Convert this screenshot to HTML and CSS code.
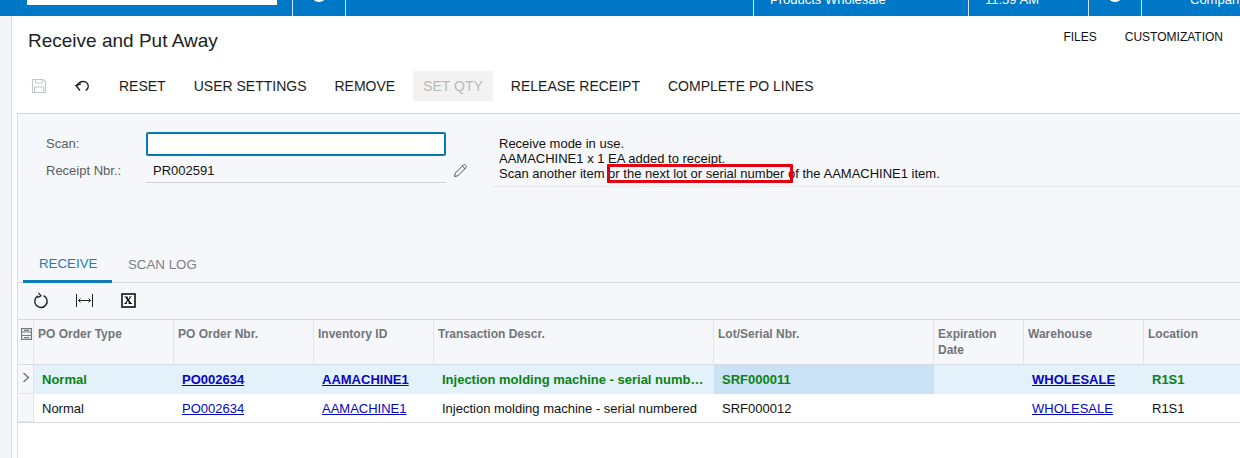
FILE: index.html
```html
<!DOCTYPE html>
<html lang="en">
<head>
<meta charset="utf-8">
<title>Receive and Put Away</title>
<link rel="stylesheet" href="styles.css">
</head>
<body>
<header class="topbar">
  <div class="cell cell-search"><div class="search"></div></div>
  <div class="cell cell-icon"><span class="dot"></span></div>
  <div class="cell cell-fill"></div>
  <div class="cell cell-branch"><span class="clip">Products Wholesale</span></div>
  <div class="cell cell-time"><span class="clip">11:59 AM</span></div>
  <div class="cell cell-icon"><span class="dot"></span></div>
  <div class="cell cell-company"><span class="clip">Company</span></div>
</header>
<div class="shell">
  <aside class="rail"></aside>
  <main class="page">
    <div class="titlebar">
      <h1>Receive and Put Away</h1>
      <nav class="links"><span>FILES</span><span>CUSTOMIZATION</span></nav>
    </div>
    <div class="toolbar">
      <button class="tool icon-tool" aria-label="Save">
        <svg width="16" height="16" viewBox="0 0 16 16" fill="none" stroke="#c4c7ca" stroke-width="1.1"><path d="M1.5 1.5h10.5l2.5 2.5v10.5h-13z"/><path d="M4.5 1.5v3.5h6.5v-3.5"/><path d="M3.5 14.5v-5.5h9v5.5"/></svg>
      </button>
      <button class="tool icon-tool undo" aria-label="Undo">
        <svg width="17" height="14" viewBox="0 0 16 14" fill="none" stroke="#222" stroke-width="1.4"><path d="M5.5 11.5 1.5 6.5l5-1.6"/><path d="M2 6.4C4.5 3.2 7.5 2 10 2.6c3.2.8 4.6 4 3.3 6.5-.5 1-1.2 1.7-2.1 2.3"/></svg>
      </button>
      <button class="tool">RESET</button>
      <button class="tool">USER SETTINGS</button>
      <button class="tool">REMOVE</button>
      <button class="tool disabled">SET QTY</button>
      <button class="tool">RELEASE RECEIPT</button>
      <button class="tool">COMPLETE PO LINES</button>
    </div>
    <section class="panel">
      <div class="form">
        <div class="fields">
          <div class="field">
            <label>Scan:</label>
            <div class="scan"></div>
          </div>
          <div class="field">
            <label>Receipt Nbr.:</label>
            <div class="value">PR002591</div>
            <svg class="pencil" width="15" height="15" viewBox="0 0 15 15" fill="none" stroke="#555" stroke-width="1"><path d="M1.5 13.5l.8-3.4 8-8.1c.6-.6 1.4-.6 2 0l.7.7c.6.6.6 1.4 0 2l-8.1 8-3.4.8z"/><path d="M9.3 3l2.7 2.7"/></svg>
          </div>
        </div>
        <div class="message">
          <div>Receive mode in use.</div>
          <div>AAMACHINE1 x 1 EA added to receipt.</div>
          <div>Scan another item or the next lot or serial number of the AAMACHINE1 item.</div>
          <span class="callout"></span>
        </div>
      </div>
      <div class="tabs">
        <div class="tab active">RECEIVE</div>
        <div class="tab">SCAN LOG</div>
      </div>
      <div class="gridbar">
        <svg width="16" height="17" viewBox="0 0 16 17" fill="none" stroke="#222" stroke-width="1.4"><path d="M5 3.8A6.2 6.2 0 1 0 10.5 3.6"/><path d="M5.5 .8 8 3.9 4.5 5.6" stroke-width="1.2"/></svg>
        <svg width="17" height="13" viewBox="0 0 17 13" fill="none" stroke="#222" stroke-width="1"><path d="M.5 0v13M16.5 0v13M2.5 6.5h12"/><path d="M4.5 4.5 2.5 6.5l2 2M12.5 4.5l2 2-2 2"/></svg>
        <svg class="xl" width="15" height="15" viewBox="0 0 15 15"><rect x="1" y="1" width="13" height="13" fill="#fff" stroke="#111" stroke-width="1.6"/><path d="M3.3 3.4h3.6v.7l-.5.2 1.2 1.8 1.1-1.8-.5-.2v-.7h2.6v.7l-.8.2-1.9 2.7 2.2 3 .7.2v.7H7.5v-.7l.5-.2-1.2-1.9-1.3 1.9.6.2v.7H3.3v-.7l.8-.2 2.1-2.9-2.1-2.8-.8-.2z" fill="#111"/></svg>
      </div>
      <div class="grid">
        <div class="hd gutter">
          <svg width="11" height="12" viewBox="0 0 11 12" fill="none" stroke="#7a7a7a" stroke-width="1.2"><rect x=".6" y=".6" width="9.8" height="10.8"/><path d="M.6 4h9.8M.6 7.5h9.8M3 2.3h5M3 9.7h5"/></svg>
        </div>
        <div class="hd">PO Order Type</div>
        <div class="hd">PO Order Nbr.</div>
        <div class="hd">Inventory ID</div>
        <div class="hd">Transaction Descr.</div>
        <div class="hd">Lot/Serial Nbr.</div>
        <div class="hd">Expiration Date</div>
        <div class="hd">Warehouse</div>
        <div class="hd last">Location</div>

        <div class="td gutter first-gutter">
          <svg width="8" height="11" viewBox="0 0 8 11" fill="none" stroke="#6d6d6d" stroke-width="1.3"><path d="M1.5 1l5 4.5-5 4.5"/></svg>
        </div>
        <div class="td sel green">Normal</div>
        <div class="td sel"><a href="#">PO002634</a></div>
        <div class="td sel"><a href="#">AAMACHINE1</a></div>
        <div class="td sel green ell">Injection molding machine - serial numbered</div>
        <div class="td sel active-cell green">SRF000011</div>
        <div class="td sel"></div>
        <div class="td sel"><a href="#">WHOLESALE</a></div>
        <div class="td sel green">R1S1</div>

        <div class="td gutter"></div>
        <div class="td">Normal</div>
        <div class="td"><a href="#">PO002634</a></div>
        <div class="td"><a href="#">AAMACHINE1</a></div>
        <div class="td ell">Injection molding machine - serial numbered</div>
        <div class="td">SRF000012</div>
        <div class="td"></div>
        <div class="td"><a href="#">WHOLESALE</a></div>
        <div class="td">R1S1</div>
      </div>
    </section>
  </main>
</div>
</body>
</html>
```
FILE: styles.css
```css
* { box-sizing: border-box; }
html, body { margin: 0; height: 100%; overflow: hidden; }
body {
  width: 1240px;
  height: 458px;
  background: #fff;
  color: #111;
  font-family: "Liberation Sans", Arial, sans-serif;
  display: flex;
  flex-direction: column;
}

.topbar {
  height: 16px;
  flex: none;
  display: flex;
  background: #0078c8;
  color: #fff;
  font-size: 13px;
  overflow: hidden;
}
.cell { height: 16px; border-left: 1px solid #cfe4f4; position: relative; overflow: hidden; }
.cell-search { width: 292px; padding-left: 27px; border-left: 0; flex: none; display: block; }
.search { width: 250px; height: 5px; background: #fff; }
.cell-icon { width: 53px; flex: none; display: flex; justify-content: center; }
.dot { width: 16px; height: 16px; border-radius: 50%; background: #fff; margin-top: -14px; }
.cell-fill { width: 408px; flex: none; }
.cell-branch { width: 215px; flex: none; padding-left: 16px; }
.cell-time { width: 120px; flex: none; padding-left: 16px; }
.cell-company { flex: 1; padding-left: 48px; }
.clip { display: block; line-height: 15px; margin-top: -8px; white-space: nowrap; }

.shell { flex: 1; display: flex; min-height: 0; }
.rail { width: 12px; flex: none; background: #f3f5f8; border-right: 1px solid #d4d6d9; }
.page { flex: 1; min-width: 0; display: flex; flex-direction: column; padding-left: 5px; }

.titlebar { height: 50px; flex: none; display: flex; justify-content: space-between; }
h1 { margin: 14px 0 0 11px; font-size: 19px; line-height: 22px; font-weight: 400; color: #222; }
.links { display: flex; gap: 28px; padding: 14px 17px 0 0; font-size: 12px; line-height: 15px; color: #111; }

.toolbar { height: 47px; flex: none; display: flex; align-items: flex-start; padding-top: 5px; }
.tool {
  height: 30px;
  padding: 0 14px;
  border: 0;
  background: none;
  font: 14px/30px "Liberation Sans", Arial, sans-serif;
  color: #1c1c1c;
}
.icon-tool { display: flex; align-items: center; justify-content: center; padding: 0; }
.tool:first-child { width: 44px; }
.undo { width: 44px; padding-right: 2px; }
.disabled { background: #f2f2f2; color: #b9b9b9; padding: 0 10px; margin: 0 4px; }

.panel { flex: 1; background: #fff; border-top: 1px solid #d3d5d9; border-left: 1px solid #dcdee1; min-height: 0; }
.form { height: 125px; display: flex; position: relative; background: #f5f7fa; }
.fields { width: 475px; padding-top: 17px; flex: none; }
.field { display: flex; align-items: center; height: 25px; margin-bottom: 2px; position: relative; }
.field label { width: 128px; padding-left: 28px; font-size: 13px; color: #5c5c5c; flex: none; }
.scan { width: 300px; height: 24px; background: #fff; border: 2px solid #0678b8; border-radius: 2px; }
.value { width: 300px; height: 25px; padding: 5px 0 0 7px; font-size: 13px; border-bottom: 1px solid #ccced1; }
.pencil { margin-left: 7px; }
.message {
  margin-left: 0;
  margin-top: 22px;
  height: 51px;
  flex: 1;
  padding-left: 6px;
  font-size: 13px;
  line-height: 15px;
  border-bottom: 1px dotted #dcdcdc;
  color: #111;
  position: relative;
}
.callout { position: absolute; left: 114px; top: 28px; width: 186px; height: 19px; border: 3px solid #e40010; border-radius: 1px; }

.tabs { height: 44px; display: flex; background: #f5f7fa; border-bottom: 1px solid #d5d7da; padding-left: 5px; font-size: 13.3px; align-items: stretch; }
.tab { padding: 18px 16px 0; color: #7d7f82; }
.tab.active { color: #1b7db8; width: 89px; border-bottom: 3px solid #0d7cbd; padding-top: 17px; margin-bottom: -1px; }
.tab + .tab { padding-left: 16px; }

.gridbar { height: 37px; display: flex; align-items: center; background: #f5f7fa; padding: 0 0 2px 15px; gap: 27px; border-bottom: 1px solid #d5d7da; }
.xl { margin-left: 1px; }

.grid {
  display: grid;
  grid-template-columns: 16px 140px 140px 120px 280px 220px 90px 120px 96px;
  grid-template-rows: 45px 29px 28px;
  border-bottom: 1px solid #d5d7da;
  background: #fff;
  font-size: 13px;
}
.hd {
  background: #f5f7fa;
  border-right: 1px solid #e2e4e7;
  border-bottom: 1px solid #d9dbde;
  padding: 6px 4px 0;
  font-size: 12px;
  line-height: 16px;
  font-weight: 700;
  color: #727579;
}
.hd.last { border-right: 0; }
.gutter { padding: 8px 0 0 2px; }
.hd.gutter { padding-left: 3px; }
.td {
  padding: 1px 8px 0;
  line-height: 28px;
  white-space: nowrap;
  overflow: hidden;
  background: #fff;
}
.td.gutter { background: #f5f7fa; border-right: 1px solid #e2e4e7; border-bottom: 1px solid #e2e4e7; padding: 7px 0 0 4px; line-height: 0; }
.ell { text-overflow: ellipsis; }
.td a { color: #0505c4; text-decoration: underline; }
.sel { background: #e3f1fa; font-weight: 700; }
.green { color: #0a8214; }
.active-cell { background: #c9e2f6; }
```
